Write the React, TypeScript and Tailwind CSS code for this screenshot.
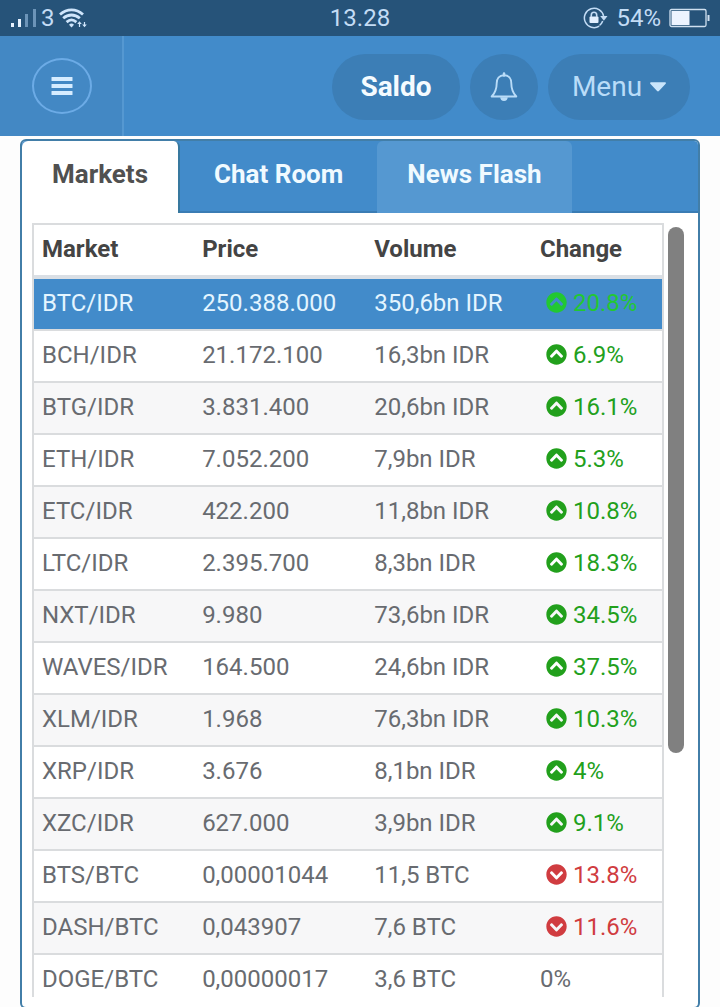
import { FaChevronCircleUp, FaChevronCircleDown } from "react-icons/fa";

type Row = {
  market: string;
  price: string;
  volume: string;
  change: string;
  trend: "up" | "down" | "flat";
};

const rows: Row[] = [
  { market: "BTC/IDR", price: "250.388.000", volume: "350,6bn IDR", change: "20.8%", trend: "up" },
  { market: "BCH/IDR", price: "21.172.100", volume: "16,3bn IDR", change: "6.9%", trend: "up" },
  { market: "BTG/IDR", price: "3.831.400", volume: "20,6bn IDR", change: "16.1%", trend: "up" },
  { market: "ETH/IDR", price: "7.052.200", volume: "7,9bn IDR", change: "5.3%", trend: "up" },
  { market: "ETC/IDR", price: "422.200", volume: "11,8bn IDR", change: "10.8%", trend: "up" },
  { market: "LTC/IDR", price: "2.395.700", volume: "8,3bn IDR", change: "18.3%", trend: "up" },
  { market: "NXT/IDR", price: "9.980", volume: "73,6bn IDR", change: "34.5%", trend: "up" },
  { market: "WAVES/IDR", price: "164.500", volume: "24,6bn IDR", change: "37.5%", trend: "up" },
  { market: "XLM/IDR", price: "1.968", volume: "76,3bn IDR", change: "10.3%", trend: "up" },
  { market: "XRP/IDR", price: "3.676", volume: "8,1bn IDR", change: "4%", trend: "up" },
  { market: "XZC/IDR", price: "627.000", volume: "3,9bn IDR", change: "9.1%", trend: "up" },
  { market: "BTS/BTC", price: "0,00001044", volume: "11,5 BTC", change: "13.8%", trend: "down" },
  { market: "DASH/BTC", price: "0,043907", volume: "7,6 BTC", change: "11.6%", trend: "down" },
  { market: "DOGE/BTC", price: "0,00000017", volume: "3,6 BTC", change: "0%", trend: "flat" },
];

function StatusBar() {
  return (
    <div className="grid h-9 shrink-0 grid-cols-[1fr_auto_1fr] items-center bg-[#265379] px-[10px] text-2xl leading-9 text-[#c3dcf5]">
      <div className="flex items-center">
        <svg width="27" height="20" viewBox="0 0 27 20" aria-hidden="true">
          <rect x="1" y="15" width="3" height="4" fill="#e8f3ff" />
          <rect x="8" y="11" width="3" height="8" fill="#e8f3ff" />
          <rect x="15" y="6" width="3" height="13" fill="#6c94b8" />
          <rect x="23" y="1" width="3" height="18" fill="#6c94b8" />
        </svg>
        <span className="ml-1">3</span>
        <svg className="ml-1" width="30" height="20" viewBox="0 0 30 20" fill="none" stroke="#cfe5fb" aria-hidden="true">
          <path d="M1 6.500C8 .2 17 .2 24 6.500" strokeWidth="2.800" />
          <path d="M4.200 10.300c5-4.400 11.600-4.400 16.600 0" strokeWidth="2.800" />
          <path d="M7.600 14.100c3-2.700 6.800-2.700 9.800 0" strokeWidth="2.800" />
          <path d="M10 16.700a3.600 3.600 0 0 1 5 0L12.500 19.500z" fill="#cfe5fb" stroke="none" />
          <path d="M20.500 19v-4M25.500 14v4" strokeWidth="1.200" />
          <path d="M18.200 16l2.300-2.800 2.300 2.800zM23.200 16.500l2.300 2.800 2.300-2.800z" fill="#cfe5fb" stroke="none" />
        </svg>
      </div>
      <span>13.28</span>
      <div className="flex items-center justify-end">
        <svg width="25" height="22" viewBox="0 0 25 22" fill="none" stroke="#c3dcf5" aria-hidden="true">
          <path d="M16.200 19.200A9.700 9.700 0 1 1 20.600 9" strokeWidth="1.500" />
          <path d="M17.200 9h7.300l-3.600 4.800z" fill="#c3dcf5" stroke="none" />
          <path d="M19.700 14a9.600 9.600 0 0 1-3.200 4.500" strokeWidth="1.500" />
          <rect x="6.500" y="9.500" width="9" height="6.500" rx="1" fill="#e3f0ff" stroke="none" />
          <path d="M8.300 10V8a2.700 2.700 0 0 1 5.400 0v2" strokeWidth="1.600" />
        </svg>
        <span className="ml-2">54%</span>
        <svg className="ml-2" width="41" height="20" viewBox="0 0 41 20" fill="none" aria-hidden="true">
          <rect x="1" y="1.500" width="36" height="17" rx="1.500" stroke="#cfe0f0" strokeWidth="1.300" />
          <rect x="2.500" y="3" width="18" height="14" fill="#edf4ff" />
          <rect x="38.500" y="7" width="2" height="6" fill="#cfe0f0" />
        </svg>
      </div>
    </div>
  );
}

function Header() {
  return (
    <header className="flex h-25 shrink-0 items-stretch bg-[#428bca]">
      <div className="flex w-31 items-center border-r-2 border-[#5598d1] bg-[#4388c4] pl-8">
        <button aria-label="Toggle navigation" className="flex h-14 w-15 items-center justify-center rounded-[50%] border-2 border-[#6cabe6]">
          <svg width="22" height="18" viewBox="0 0 22 18" fill="#d6ecff" aria-hidden="true">
            <rect x="0.500" y="0" width="21" height="4" rx="0.500" />
            <rect x="0.500" y="7" width="21" height="4" rx="0.500" />
            <rect x="0.500" y="14" width="21" height="4" rx="0.500" />
          </svg>
        </button>
      </div>
      <div className="flex flex-1 items-center justify-end gap-[10px] pt-[2px] pr-[30px]">
        <button className="h-[66px] w-32 rounded-full bg-[#3c7eb6] text-[28px] font-bold text-[#f4fbff]">Saldo</button>
        <button aria-label="Notifications" className="flex h-[66px] w-17 items-center justify-center rounded-full bg-[#3c7eb6]">
          <svg width="28" height="30" viewBox="0 0 28 30" fill="none" stroke="#b9dcf8" strokeWidth="1.900" strokeLinejoin="round" aria-hidden="true">
            <path d="M14 1.500v2" strokeLinecap="round" strokeWidth="2.500" />
            <path d="M14 3.200c-5 0-7.300 3.700-7.300 8 0 6.300-1.700 9.800-5 13.300h24.600c-3.300-3.500-5-7-5-13.300 0-4.300-2.300-8-7.300-8z" />
            <path d="M10.300 25.200a3.700 3.700 0 0 0 7.400 0z" fill="#b9dcf8" stroke="none" />
          </svg>
        </button>
        <button className="flex h-[66px] w-[142px] items-center justify-center gap-2 rounded-full bg-[#3c7eb6] text-[28px] text-[#b9dcf8]">
          Menu
          <svg width="16" height="10" viewBox="0 0 16 10" fill="#c9e5fc" aria-hidden="true">
            <path d="M1 .3h14c.8 0 1.200.9.7 1.500l-6.800 7.300c-.5.600-1.300.6-1.800 0L.3 1.800C-.2 1.200.2.3 1 .3z" />
          </svg>
        </button>
      </div>
    </header>
  );
}

function Tabs() {
  return (
    <div role="tablist" className="flex h-18 shrink-0 gap-1 bg-[#428bca] text-[26px] leading-8 font-bold text-[#f0faff] shadow-[inset_0_-2px_0_#3a7cb4]">
      <button role="tab" aria-selected="true" className="rounded-t-md border-r-2 border-[#38789f] bg-white px-[30px] pb-[6px] text-[#505050]">
        Markets
      </button>
      <button role="tab" aria-selected="false" className="rounded-t-md px-[30px] pb-[6px]">
        Chat Room
      </button>
      <button role="tab" aria-selected="false" className="rounded-t-md bg-[#5598d1] px-[30px] pb-[6px]">
        News Flash
      </button>
    </div>
  );
}

function Change({ row, active }: { row: Row; active: boolean }) {
  if (row.trend === "flat") return <>{row.change}</>;
  const Icon = row.trend === "up" ? FaChevronCircleUp : FaChevronCircleDown;
  const color = row.trend === "down" ? "text-[#d03c40]" : active ? "text-[#22c832]" : "text-[#22a01c]";
  return (
    <span className={`flex items-center gap-[6px] pl-[6px] ${color}`}>
      <Icon className="mb-[2px] size-[21px]" aria-hidden="true" />
      {row.change}
    </span>
  );
}

function MarketTable() {
  return (
    <table className="w-full table-fixed border-separate border-spacing-0 border-x-2 border-t-2 border-[#dadcde] text-left text-2xl text-[#686b70]">
      <thead>
        <tr className="h-[54px] text-[#444444]">
          <th className="w-[25.5%] border-b-4 border-[#dadfe5] p-0 pb-[2px] pl-2 font-bold">Market</th>
          <th className="w-[27.4%] border-b-4 border-[#dadfe5] p-0 pb-[2px] pl-2 font-bold">Price</th>
          <th className="w-[26.4%] border-b-4 border-[#dadfe5] p-0 pb-[2px] pl-2 font-bold">Volume</th>
          <th className="border-b-4 border-[#dadfe5] p-0 pb-[2px] pl-2 font-bold">Change</th>
        </tr>
      </thead>
      <tbody>
        {rows.map((row, i) => {
          const tone = i === 0 ? "bg-[#428bca] text-[#e4f5ff]" : i % 2 === 0 ? "bg-[#f7f7f8]" : "bg-white";
          return (
            <tr key={row.market} className={`h-13 ${tone}`}>
              <td className="border-b-2 border-[#dadcde] p-0 pb-[2px] pl-2">{row.market}</td>
              <td className="border-b-2 border-[#dadcde] p-0 pb-[2px] pl-2">{row.price}</td>
              <td className="border-b-2 border-[#dadcde] p-0 pb-[2px] pl-2">{row.volume}</td>
              <td className="border-b-2 border-[#dadcde] p-0 pb-[2px] pl-2">
                <Change row={row} active={i === 0} />
              </td>
            </tr>
          );
        })}
      </tbody>
    </table>
  );
}

export default function App() {
  return (
    <div className="flex h-screen flex-col overflow-hidden bg-[#fdfdfd] font-[Roboto,sans-serif]">
      <StatusBar />
      <Header />
      <main className="mx-5 mt-[3px] -mb-[2px] flex min-h-0 flex-1 flex-col overflow-hidden rounded-md border-2 border-[#427ea8] bg-white">
        <Tabs />
        <div className="mt-[10px] mr-[14px] mb-[10px] ml-[10px] flex min-h-0 flex-1 gap-1 overflow-hidden">
          <div className="min-w-0 flex-1">
            <MarketTable />
          </div>
          <div className="mt-1 h-[68%] w-4 rounded-full bg-[#808080]" />
        </div>
      </main>
    </div>
  );
}
